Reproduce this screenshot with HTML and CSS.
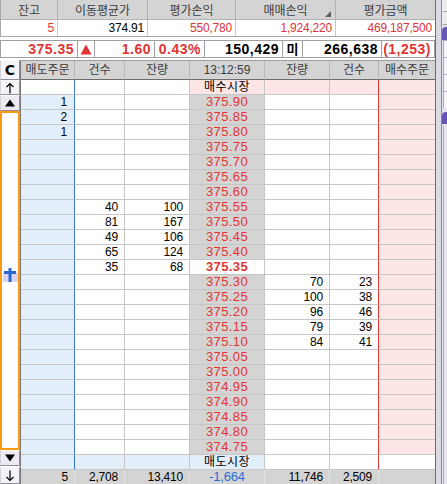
FILE: index.html
```html
<!DOCTYPE html>
<html lang="ko">
<head>
<meta charset="utf-8">
<title>호가</title>
<link rel="stylesheet" href="styles.css">
</head>
<body>
<div class="app">
  <div class="main">
    <div class="summary">
      <div class="sh">잔고</div><div class="sh">이동평균가</div><div class="sh">평가손익</div><div class="sh corner">매매손익</div><div class="sh last">평가금액</div>
      <div class="sd red">5</div><div class="sd">374.91</div><div class="sd red">550,780</div><div class="sd red">1,924,220</div><div class="sd red last">469,187,500</div>
    </div>
    <div class="quote">
      <div class="q red">375.35</div>
      <div class="q ctr tri"><svg width="12" height="11" viewBox="0 0 12 11"><polygon points="6,0.5 11.5,10.5 0.5,10.5" fill="#e13434"/></svg></div>
      <div class="q red">1.60</div>
      <div class="q red">0.43%</div>
      <div class="q">150,429</div>
      <div class="q ctr kr">미</div>
      <div class="q">266,638</div>
      <div class="q red">(1,253)</div>
    </div>
    <div class="board">
      <div class="side">
        <div class="btn b-c">C</div>
        <div class="btn b-s"><svg width="12" height="12" viewBox="0 0 12 12"><path d="M6 1.5V11.5M2.5 5L6 1.5L9.5 5" fill="none" stroke="#000" stroke-width="1.2"/></svg></div>
        <div class="btn b-m"><svg width="12" height="10" viewBox="0 0 12 10"><polygon points="6,1.5 11,8.5 1,8.5" fill="#000"/></svg></div>
        <div class="panel">
          <svg class="cursor" width="16" height="15" viewBox="0 0 16 15"><rect x="1" y="5" width="15" height="9" fill="#d9d2ee"/><rect x="2" y="3" width="12" height="3" fill="#2b67d1"/><rect x="6.5" y="0" width="3" height="14" fill="#2b67d1"/></svg>
        </div>
        <div class="btn b-m"><svg width="12" height="10" viewBox="0 0 12 10"><polygon points="1,1.5 11,1.5 6,8.5" fill="#000"/></svg></div>
        <div class="btn b-e"><svg width="12" height="12" viewBox="0 0 12 12"><path d="M6 0.5V10.5M2.5 7L6 10.5L9.5 7" fill="none" stroke="#000" stroke-width="1.2"/></svg></div>
      </div>
      <div class="book">
        <div class="h">매도주문</div><div class="h">건수</div><div class="h">잔량</div><div class="h">13:12:59</div><div class="h">잔량</div><div class="h">건수</div><div class="h hl">매수주문</div>

        <div class="c bl"></div><div class="c"></div><div class="c"></div><div class="c mk pk">매수시장</div><div class="c pk"></div><div class="c pk rl"></div><div class="c bid"></div>

        <div class="c bl ord">1</div><div class="c"></div><div class="c"></div><div class="c px">375.90</div><div class="c"></div><div class="c rl"></div><div class="c bid"></div>
        <div class="c bl ord">2</div><div class="c"></div><div class="c"></div><div class="c px">375.85</div><div class="c"></div><div class="c rl"></div><div class="c bid"></div>
        <div class="c bl ord">1</div><div class="c"></div><div class="c"></div><div class="c px">375.80</div><div class="c"></div><div class="c rl"></div><div class="c bid"></div>
        <div class="c bl ord"></div><div class="c"></div><div class="c"></div><div class="c px">375.75</div><div class="c"></div><div class="c rl"></div><div class="c bid"></div>
        <div class="c bl ord"></div><div class="c"></div><div class="c"></div><div class="c px">375.70</div><div class="c"></div><div class="c rl"></div><div class="c bid"></div>
        <div class="c bl ord"></div><div class="c"></div><div class="c"></div><div class="c px">375.65</div><div class="c"></div><div class="c rl"></div><div class="c bid"></div>
        <div class="c bl ord"></div><div class="c"></div><div class="c"></div><div class="c px">375.60</div><div class="c"></div><div class="c rl"></div><div class="c bid"></div>
        <div class="c bl ord"></div><div class="c">40</div><div class="c">100</div><div class="c px">375.55</div><div class="c"></div><div class="c rl"></div><div class="c bid"></div>
        <div class="c bl ord"></div><div class="c">81</div><div class="c">167</div><div class="c px">375.50</div><div class="c"></div><div class="c rl"></div><div class="c bid"></div>
        <div class="c bl ord"></div><div class="c">49</div><div class="c">106</div><div class="c px">375.45</div><div class="c"></div><div class="c rl"></div><div class="c bid"></div>
        <div class="c bl ord"></div><div class="c">65</div><div class="c">124</div><div class="c px">375.40</div><div class="c"></div><div class="c rl"></div><div class="c bid"></div>
        <div class="c bl ord"></div><div class="c">35</div><div class="c">68</div><div class="c px cur">375.35</div><div class="c"></div><div class="c rl"></div><div class="c bid"></div>
        <div class="c bl ord"></div><div class="c"></div><div class="c"></div><div class="c px">375.30</div><div class="c">70</div><div class="c rl">23</div><div class="c bid"></div>
        <div class="c bl ord"></div><div class="c"></div><div class="c"></div><div class="c px">375.25</div><div class="c">100</div><div class="c rl">38</div><div class="c bid"></div>
        <div class="c bl ord"></div><div class="c"></div><div class="c"></div><div class="c px">375.20</div><div class="c">96</div><div class="c rl">46</div><div class="c bid"></div>
        <div class="c bl ord"></div><div class="c"></div><div class="c"></div><div class="c px">375.15</div><div class="c">79</div><div class="c rl">39</div><div class="c bid"></div>
        <div class="c bl ord"></div><div class="c"></div><div class="c"></div><div class="c px">375.10</div><div class="c">84</div><div class="c rl">41</div><div class="c bid"></div>
        <div class="c bl ord"></div><div class="c"></div><div class="c"></div><div class="c px">375.05</div><div class="c"></div><div class="c rl"></div><div class="c bid"></div>
        <div class="c bl ord"></div><div class="c"></div><div class="c"></div><div class="c px">375.00</div><div class="c"></div><div class="c rl"></div><div class="c bid"></div>
        <div class="c bl ord"></div><div class="c"></div><div class="c"></div><div class="c px">374.95</div><div class="c"></div><div class="c rl"></div><div class="c bid"></div>
        <div class="c bl ord"></div><div class="c"></div><div class="c"></div><div class="c px">374.90</div><div class="c"></div><div class="c rl"></div><div class="c bid"></div>
        <div class="c bl ord"></div><div class="c"></div><div class="c"></div><div class="c px">374.85</div><div class="c"></div><div class="c rl"></div><div class="c bid"></div>
        <div class="c bl ord"></div><div class="c"></div><div class="c"></div><div class="c px">374.80</div><div class="c"></div><div class="c rl"></div><div class="c bid"></div>
        <div class="c bl ord"></div><div class="c"></div><div class="c"></div><div class="c px">374.75</div><div class="c"></div><div class="c rl"></div><div class="c bid"></div>

        <div class="c bl ord"></div><div class="c ord"></div><div class="c ord"></div><div class="c mk ord">매도시장</div><div class="c"></div><div class="c rl"></div><div class="c wt"></div>

        <div class="c t">5</div><div class="c t">2,708</div><div class="c t">13,410</div><div class="c t blue">-1,664</div><div class="c t">11,746</div><div class="c t">2,509</div><div class="c t tl"></div>
      </div>
    </div>
  </div>
  <div class="strip">
    <div class="strip-a"></div>
    <div class="strip-line"></div>
    <div class="strip-b">
      <div class="sb-t"></div>
      <div class="sb-t"></div>
      <div class="sb-tab"></div>
      <div class="sb-box"></div>
      <div class="sb-box"></div>
      <div class="sb-box"></div>
      <div class="sb-box"></div>
      <div class="sb-tab sb-tab2"></div>
      <div class="sb-rest"></div>
    </div>
  </div>
</div>
</body>
</html>
```
FILE: styles.css
```css
html, body {
  margin: 0;
  padding: 0;
  background: #ffffff;
}
body {
  width: 447px;
  height: 484px;
  overflow: hidden;
  font-family: "Liberation Sans", "Noto Sans CJK KR", sans-serif;
  font-size: 12px;
  color: #000;
}
.app {
  display: flex;
  height: 484px;
}
.main {
  width: 435px;
  display: flex;
  flex-direction: column;
}

/* summary table */
.summary {
  display: grid;
  grid-template-columns: 57px 90px 88px 100px 99px;
  border-left: 1px solid #a8a8a8;
  border-bottom: 1px solid #a8a8a8;
}
.sh {
  box-sizing: border-box;
  height: 20px;
  background: #d4d4d4;
  border-right: 1px solid #b2b2b2;
  border-bottom: 1px solid #b2b2b2;
  text-align: center;
  line-height: 19px;
  color: #3c3c3c;
  font-size: 12px;
  font-family: "Noto Sans CJK KR", sans-serif;
}
.corner {
  position: relative;
}
.corner::after {
  content: "";
  position: absolute;
  right: 4px;
  bottom: 2px;
  border-style: solid;
  border-width: 0 0 6px 6px;
  border-color: transparent transparent #606060 transparent;
}
.sd {
  box-sizing: border-box;
  height: 16px;
  border-right: 1px solid #c8c8c8;
  text-align: right;
  padding-right: 3px;
  line-height: 16px;
  letter-spacing: -0.2px;
}
.last {
  border-right: none;
}
.red {
  color: #e13434;
}

/* quote row */
.quote {
  display: grid;
  grid-template-columns: 77px 17px 60px 50px 78px 20px 79px 53px;
  border-left: 1px solid #a0a0a0;
  margin-top: 3px;
}
.q {
  box-sizing: border-box;
  height: 18px;
  border-top: 1px solid #a0a0a0;
  border-bottom: 1px solid #a0a0a0;
  border-right: 1px solid #a0a0a0;
  text-align: right;
  padding-right: 3px;
  font-weight: bold;
  font-size: 14px;
  letter-spacing: 0.5px;
  line-height: 16px;
}
.q.ctr {
  text-align: center;
  padding: 0;
  letter-spacing: 0;
}
.tri {
  display: flex;
  align-items: center;
  justify-content: center;
}
.kr {
  font-family: "Noto Sans CJK KR", sans-serif;
  font-size: 13px;
}

/* board */
.board {
  display: flex;
  margin-top: 2px;
  flex: 1;
}
.side {
  width: 20px;
  display: flex;
  flex-direction: column;
}
.btn {
  box-sizing: border-box;
  background: #ebebf1;
  border: 1px solid;
  border-color: #fbfbfb #8e8e9c #8e8e9c #d2d2da;
  display: flex;
  align-items: center;
  justify-content: center;
}
.b-c {
  height: 20px;
  font-weight: bold;
  font-size: 14px;
  font-family: "DejaVu Sans", sans-serif;
  background: #f4f4f8;
}
.b-s {
  height: 15px;
  background: #f4f4f8;
}
.b-m {
  height: 16px;
}
.b-e {
  height: 17px;
  margin-top: 1px;
  background: #f4f4f8;
}
.panel {
  box-sizing: border-box;
  height: 339px;
  border: 2px solid #ff9a10;
  background: #ffffff;
  display: flex;
  flex-direction: column;
}
.cursor {
  margin-top: 155px;
  display: block;
}

.book {
  display: grid;
  grid-template-columns: 54px 50px 65px 75px 65px 49px 56px;
  border-left: 1px solid #7a7a7a;
  border-top: 1px solid #9c9c9c;
  align-content: start;
}
.h {
  box-sizing: border-box;
  height: 19px;
  background: #d4d4d4;
  border-right: 1px solid #b8b8b8;
  border-bottom: 1px solid #6c6c6c;
  text-align: center;
  line-height: 18px;
  color: #3c3c3c;
  font-size: 12px;
}
.hl {
  border-right: none;
}
.c {
  box-sizing: border-box;
  height: 15px;
  border-right: 1px solid #c6c6c6;
  border-bottom: 1px solid #c6c6c6;
  background: #ffffff;
  text-align: right;
  padding-right: 6px;
  line-height: 14px;
  font-size: 12px;
  letter-spacing: -0.2px;
  white-space: nowrap;
  overflow: hidden;
}
.bl {
  border-right-color: #3b78d6;
  padding-right: 7px;
}
.ord {
  background: #e3eefb;
}
.rl {
  border-right-color: #e13434;
}
.bid {
  background: #fde6e6;
  border-right: none;
}
.wt {
  border-right: none;
}
.pk {
  background: #fde6e6;
}
.px {
  background: #d4d4d4;
  color: #e13434;
  text-align: center;
  padding: 0;
  font-size: 13px;
  letter-spacing: 0.4px;
}
.cur {
  background: #ffffff;
  font-weight: bold;
}
.mk {
  text-align: center;
  padding: 0;
  font-size: 12px;
  line-height: 14px;
  letter-spacing: 0.5px;
  color: #000;
}
.t {
  background: #d4d4d4;
  border-right-color: #e4e4e4;
  border-bottom: none;
}
.tl {
  border-right: none;
}
.t.blue {
  color: #2a6fd8;
  text-align: center;
  padding: 0;
  font-size: 13px;
}

/* right strip */
.strip {
  width: 12px;
  box-sizing: border-box;
  border-left: 1px solid #6b6b6b;
  display: flex;
  height: 484px;
}
.strip-a {
  width: 5px;
  background: #dadae2;
}
.strip-line {
  width: 1px;
  background: #8c8c96;
}
.strip-b {
  width: 5px;
  display: flex;
  flex-direction: column;
  background: #e2e2e8;
}
.sb-t {
  box-sizing: border-box;
  height: 12px;
  background: #ececec;
  border-bottom: 1px solid #a4a4a4;
  border-left: 2px solid #ececec;
}
.sb-t + .sb-t {
  height: 13px;
}
.sb-tab {
  height: 13px;
  margin-top: 2px;
  background: #6756b8;
  border-top-left-radius: 4px;
}
.sb-tab2 {
  height: 12px;
  margin-top: 4px;
}
.sb-box {
  box-sizing: border-box;
  height: 17px;
  background: #f6f6fa;
  border-top: 1px solid #aeaebe;
  border-left: 1px solid #aeaebe;
  margin-left: 1px;
}
.sb-rest {
  flex: 1;
  margin-top: 2px;
  margin-left: 1px;
  border-left: 1px solid #aeaebe;
  background: #e6e6ec;
}
```
